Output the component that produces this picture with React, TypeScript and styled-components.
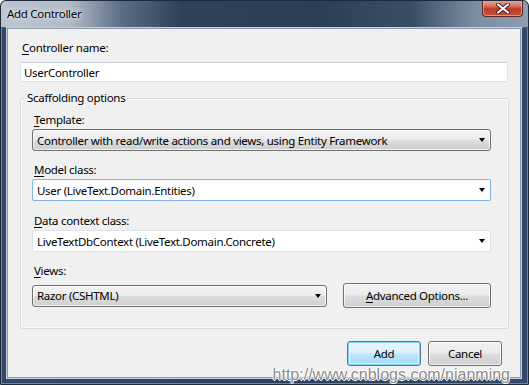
import * as React from "react";
import styled, { createGlobalStyle } from "styled-components";

const COLORS = {
  frame: "#2c4260",
  client: "#f0f0f0",
  text: "#000000",
  buttonBorder: "#707070",
  focusBorder: "#7eb4ea",
};

const FONT = `"Noto Sans", "Open Sans", sans-serif`;

const GlobalStyle = createGlobalStyle`
  html, body {
    margin: 0;
    padding: 0;
    background: #ffffff;
  }
  body {
    font-family: ${FONT};
    font-size: 11.5px;
    letter-spacing: -0.3px;
  }
`;

const Window = styled.div`
  position: relative;
  width: 529px;
  height: 385px;
  box-sizing: border-box;
  display: flex;
  flex-direction: column;
  background: linear-gradient(90deg, #33496a 0%, #2b4060 50%, #33496a 100%);
  border: 1px solid #1c2a3b;
  border-radius: 6px 6px 0 0;
  box-shadow: inset 0 0 0 1px #6f86a3;
  overflow: hidden;
`;

const TitleBar = styled.div`
  height: 26px;
  flex: none;
  display: flex;
  align-items: flex-start;
  justify-content: space-between;
  padding: 0 5px 0 6px;
  background: linear-gradient(
    90deg,
    #bcc5cf 0%,
    #b1bcc7 13%,
    #5a6d84 23%,
    #2f4259 34%,
    #2b3e56 60%,
    #394e66 78%,
    #7d8ea2 90%,
    #8e9db0 100%
  );
  border-bottom: 1px solid #50637a;
  border-radius: 5px 5px 0 0;
`;

const Title = styled.div`
  font-size: 11.5px;
  line-height: 25px;
  color: ${COLORS.text};
  text-shadow: 0 0 6px #e8edf2, 0 0 3px #e8edf2;
`;

const CloseButton = styled.div`
  width: 41px;
  height: 17px;
  margin-top: -1px;
  box-sizing: border-box;
  display: flex;
  align-items: center;
  justify-content: center;
  border: 1px solid #5b2521;
  border-top: none;
  border-radius: 0 0 4px 4px;
  background: linear-gradient(180deg, #e8a89b 0%, #d47a69 35%, #c0392a 55%, #c8503a 100%);
  box-shadow: inset 0 0 0 1px rgba(255, 210, 200, 0.5);
`;

const Client = styled.div`
  flex: 1;
  margin: 0 7px 6px 6px;
  display: flex;
  flex-direction: column;
  padding: 11px 12px 11px 12px;
  background: ${COLORS.client};
  border: 1px solid #8a9bb0;
  box-shadow: 0 0 0 1px #c5d0dc;
`;

const Label = styled.div<{ $gap?: number }>`
  line-height: 16px;
  height: 16px;
  color: ${COLORS.text};
  padding-left: 2px;
  margin-bottom: ${(p) => (p.$gap ?? 1)}px;
  white-space: nowrap;
`;

const Key = styled.span`
  text-decoration: underline;
  text-underline-offset: 2px;
`;

const TextBox = styled.div`
  height: 20px;
  box-sizing: border-box;
  display: flex;
  align-items: center;
  padding-left: 3px;
  background: #ffffff;
  border: 1px solid #dde2e8;
  border-top-color: #c4cbd4;
  border-radius: 2px;
  color: ${COLORS.text};
`;

const Group = styled.fieldset`
  margin: 8px -1px 0 0;
  padding: 6px 17px 20px 11px;
  border: 1px solid #d5dbe1;
  border-radius: 3px;
  box-shadow: inset 0 0 0 1px #fbfbfb;
  display: flex;
  flex-direction: column;
  min-width: 0;
`;

const Legend = styled.legend`
  margin-left: -7px;
  padding: 0 2px;
  line-height: 16px;
  color: ${COLORS.text};
`;

const Field = styled.div<{ $top?: number }>`
  display: flex;
  flex-direction: column;
  margin-top: ${(p) => (p.$top ?? 0)}px;
`;

const Combo = styled.div<{ $editable?: boolean; $focused?: boolean; $width?: number }>`
  position: relative;
  height: 22px;
  box-sizing: border-box;
  width: ${(p) => (p.$width ? `${p.$width}px` : "auto")};
  display: flex;
  align-items: center;
  padding: 0 20px 0 4px;
  color: ${COLORS.text};
  white-space: nowrap;
  overflow: hidden;
  border-radius: ${(p) => (p.$editable ? "2px" : "3px")};
  border: 1px solid
    ${(p) => (p.$focused ? COLORS.focusBorder : p.$editable ? "#dfe3e9" : COLORS.buttonBorder)};
  background: ${(p) =>
    p.$editable
      ? "#ffffff"
      : "linear-gradient(180deg, #f3f3f3 0%, #ebebeb 48%, #dddddd 52%, #cfcfcf 100%)"};
  box-shadow: ${(p) => (p.$editable ? "none" : "inset 0 0 0 1px rgba(255,255,255,0.7)")};
`;

const Arrow = styled.span`
  position: absolute;
  right: 5px;
  top: 8px;
  width: 0;
  height: 0;
  border-left: 3.5px solid transparent;
  border-right: 3.5px solid transparent;
  border-top: 4px solid #000000;
`;

const Row = styled.div`
  display: flex;
  align-items: center;
  justify-content: space-between;
`;

const Button = styled.button<{ $primary?: boolean; $width: number }>`
  width: ${(p) => p.$width}px;
  height: 25px;
  box-sizing: border-box;
  padding: 0;
  font-family: ${FONT};
  font-size: 11.5px;
  letter-spacing: -0.3px;
  color: ${COLORS.text};
  border-radius: 3px;
  border: 1px solid ${(p) => (p.$primary ? "#3c7fb1" : COLORS.buttonBorder)};
  background: ${(p) =>
    p.$primary
      ? "linear-gradient(180deg, #eaf6fd 0%, #d9f0fc 48%, #bee6fd 52%, #a7d9f5 100%)"
      : "linear-gradient(180deg, #f2f2f2 0%, #ebebeb 48%, #dddddd 52%, #cfcfcf 100%)"};
  box-shadow: ${(p) =>
    p.$primary
      ? "inset 0 0 0 1px #7fd0f4, inset 0 0 0 2px rgba(255,255,255,0.5)"
      : "inset 0 0 0 1px rgba(255,255,255,0.7)"};
`;

const Footer = styled.div`
  margin-top: auto;
  display: flex;
  justify-content: flex-end;
  gap: 7px;
  padding-right: 6px;
`;

const Watermark = styled.div`
  position: absolute;
  right: 18px;
  bottom: 1px;
  font-family: "Liberation Sans", Arial, sans-serif;
  font-size: 16px;
  letter-spacing: 0;
  line-height: 17px;
  color: #8c8c8c;
  text-shadow: 1px 0 0 #fff, -1px 0 0 #fff, 0 1px 0 #fff, 0 -1px 0 #fff;
`;

const CloseIcon = () => (
  <svg width="14" height="11" viewBox="0 0 14 11">
    <path d="M2 1.5 L12 9.5 M12 1.5 L2 9.5" stroke="#4a1a14" strokeWidth="4" strokeLinecap="round" />
    <path d="M2 1.5 L12 9.5 M12 1.5 L2 9.5" stroke="#ffffff" strokeWidth="2.2" strokeLinecap="round" />
  </svg>
);

export default function App() {
  return (
    <>
      <GlobalStyle />
      <Window>
        <TitleBar>
          <Title>Add Controller</Title>
          <CloseButton>
            <CloseIcon />
          </CloseButton>
        </TitleBar>
        <Client>
          <Label $gap={6}>
            <Key>C</Key>ontroller name:
          </Label>
          <TextBox>UserController</TextBox>
          <Group>
            <Legend>Scaffolding options</Legend>
            <Field>
              <Label>
                <Key>T</Key>emplate:
              </Label>
              <Combo>
                Controller with read/write actions and views, using Entity Framework
                <Arrow />
              </Combo>
            </Field>
            <Field $top={11}>
              <Label>
                <Key>M</Key>odel class:
              </Label>
              <Combo $editable $focused>
                User (LiveText.Domain.Entities)
                <Arrow />
              </Combo>
            </Field>
            <Field $top={12}>
              <Label>
                <Key>D</Key>ata context class:
              </Label>
              <Combo $editable>
                LiveTextDbContext (LiveText.Domain.Concrete)
                <Arrow />
              </Combo>
            </Field>
            <Field $top={11}>
              <Label $gap={4}>
                <Key>V</Key>iews:
              </Label>
              <Row>
                <Combo $width={295}>
                  Razor (CSHTML)
                  <Arrow />
                </Combo>
                <Button $width={148}>
                  <Key>A</Key>dvanced Options...
                </Button>
              </Row>
            </Field>
          </Group>
          <Footer>
            <Button $primary $width={74}>
              Add
            </Button>
            <Button $width={74}>Cancel</Button>
          </Footer>
        </Client>
        <Watermark>http://www.cnblogs.com/nianming</Watermark>
      </Window>
    </>
  );
}
